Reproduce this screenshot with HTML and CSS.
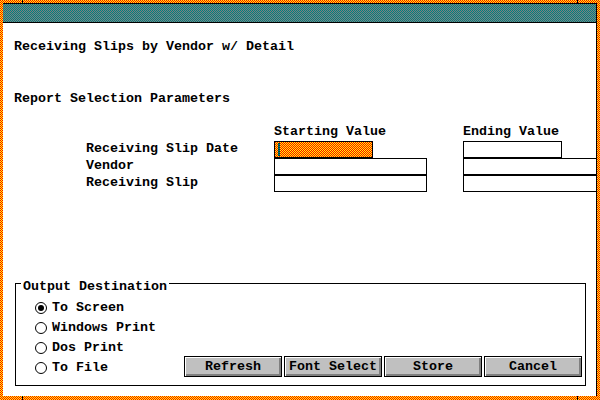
FILE: index.html
```html
<!DOCTYPE html>
<html>
<head>
<meta charset="utf-8">
<link rel="stylesheet" href="styles.css">
</head>
<body>
<div class="window">
  <div class="titlebar"></div>
  <p class="heading">Receiving Slips by Vendor w/ Detail</p>
  <p class="subheading">Report Selection Parameters</p>
  <div class="params">
    <div class="cell"></div>
    <div class="cell colhead">Starting Value</div>
    <div class="cell colhead">Ending Value</div>

    <div class="cell label">Receiving Slip Date</div>
    <div class="cell"><div class="field short selected"><span class="caret"></span></div></div>
    <div class="cell"><div class="field short"></div></div>

    <div class="cell label">Vendor</div>
    <div class="cell"><div class="field long"></div></div>
    <div class="cell"><div class="field wide"></div></div>

    <div class="cell label">Receiving Slip</div>
    <div class="cell"><div class="field long"></div></div>
    <div class="cell"><div class="field wide"></div></div>
  </div>

  <fieldset class="group">
    <legend class="legend">Output Destination</legend>
    <div class="group-body">
      <div class="radios">
        <div class="radio-row"><span class="radio checked"></span><span>To Screen</span></div>
        <div class="radio-row"><span class="radio"></span><span>Windows Print</span></div>
        <div class="radio-row"><span class="radio"></span><span>Dos Print</span></div>
        <div class="radio-row"><span class="radio"></span><span>To File</span></div>
      </div>
      <div class="buttons">
        <div class="btn">Refresh</div>
        <div class="btn">Font Select</div>
        <div class="btn">Store</div>
        <div class="btn">Cancel</div>
      </div>
    </div>
  </fieldset>
</div>
</body>
</html>
```
FILE: styles.css
```css
html, body {
  margin: 0;
  padding: 0;
}
body {
  width: 600px;
  height: 400px;
  overflow: hidden;
  font-family: "Liberation Mono", "DejaVu Sans Mono", monospace;
  font-weight: bold;
  font-size: 13.33px;
  line-height: 16px;
  color: #000;
  background-color: #ff0000;
  background-image:
    linear-gradient(#000, #000),
    linear-gradient(#000, #000),
    linear-gradient(#000, #000),
    linear-gradient(#000, #000),
    url("data:image/svg+xml,%3Csvg xmlns='http://www.w3.org/2000/svg' width='2' height='2' shape-rendering='crispEdges'%3E%3Crect width='2' height='2' fill='%23ffff00'/%3E%3Crect width='1' height='1' fill='%23ff0000'/%3E%3Crect x='1' y='1' width='1' height='1' fill='%23ff0000'/%3E%3C/svg%3E");
  background-position: 22px 0, 577px 0, 22px 396px, 577px 396px, 0 0;
  background-size: 1px 3px, 1px 3px, 1px 4px, 1px 4px, 2px 2px;
  background-repeat: no-repeat, no-repeat, no-repeat, no-repeat, repeat;
  image-rendering: pixelated;
}
.window {
  box-sizing: border-box;
  margin: 3px;
  width: 594px;
  height: 393px;
  background: #fff;
  border-right: 1px solid #000;
  overflow: hidden;
}
.titlebar {
  box-sizing: border-box;
  height: 20px;
  border-top: 1px solid #000;
  border-bottom: 1px solid #000;
  background-color: #008080;
  background-image: url("data:image/svg+xml,%3Csvg xmlns='http://www.w3.org/2000/svg' width='2' height='2' shape-rendering='crispEdges'%3E%3Crect width='2' height='2' fill='%23008080'/%3E%3Crect width='1' height='1' fill='%23808080'/%3E%3Crect x='1' y='1' width='1' height='1' fill='%23808080'/%3E%3C/svg%3E");
  background-size: 2px 2px;
  image-rendering: pixelated;
}
.heading {
  margin: 16px 0 0 11px;
  white-space: pre;
}
.subheading {
  margin: 36px 0 0 11px;
  white-space: pre;
}
.params {
  display: grid;
  grid-template-columns: 188px 189px 200px;
  grid-template-rows: 17px 17px 17px 17px;
  margin: 17px 0 0 83px;
  width: 577px;
}
.cell {
  white-space: pre;
}
.label {
  line-height: 16px;
}
.field {
  box-sizing: border-box;
  height: 17px;
  border: 1px solid #000;
  background: #fff;
}
.field.short {
  width: 99px;
}
.field.long {
  width: 153px;
}
.field.wide {
  width: 180px;
}
.field.selected {
  background-color: #ff0000;
  background-image: url("data:image/svg+xml,%3Csvg xmlns='http://www.w3.org/2000/svg' width='2' height='2' shape-rendering='crispEdges'%3E%3Crect width='2' height='2' fill='%23ffff00'/%3E%3Crect width='1' height='1' fill='%23ff0000'/%3E%3Crect x='1' y='1' width='1' height='1' fill='%23ff0000'/%3E%3C/svg%3E");
  background-size: 2px 2px;
  image-rendering: pixelated;
  display: flex;
  align-items: flex-start;
}
.caret {
  display: block;
  width: 2px;
  height: 13px;
  margin: 1px 0 0 3px;
  background: repeating-linear-gradient(#003c3c 0 1px, #008080 1px 2px);
}
.group {
  box-sizing: border-box;
  margin: 80px 0 0 12px;
  width: 571px;
  min-width: 0;
  border: 1px solid #000;
  padding: 3px 3px 7px 5px;
}
.legend {
  padding: 7px 2px 0 2px;
  line-height: 16px;
  white-space: pre;
}
.group-body {
  display: flex;
  align-items: flex-end;
}
.radios {
  display: flex;
  flex-direction: column;
  margin-left: 14px;
}
.radio-row {
  display: flex;
  align-items: center;
  height: 20px;
  line-height: 20px;
  white-space: pre;
}
.radio {
  box-sizing: border-box;
  width: 12px;
  height: 12px;
  border: 1px solid #000;
  border-radius: 50%;
  margin-right: 5px;
  background: #fff;
  display: flex;
  align-items: center;
  justify-content: center;
}
.radio.checked::after {
  content: "";
  width: 6px;
  height: 6px;
  border-radius: 50%;
  background: #000;
}
.buttons {
  margin-left: auto;
  margin-bottom: 1px;
  display: flex;
  gap: 2px;
}
.btn {
  box-sizing: border-box;
  width: 98px;
  height: 21px;
  border: 1px solid #000;
  background: #c0c0c0;
  box-shadow: inset 1px 1px 0 #fff, inset -2px -2px 0 #808080;
  display: flex;
  align-items: center;
  justify-content: center;
  padding-top: 1px;
  white-space: pre;
  line-height: 16px;
}
```
